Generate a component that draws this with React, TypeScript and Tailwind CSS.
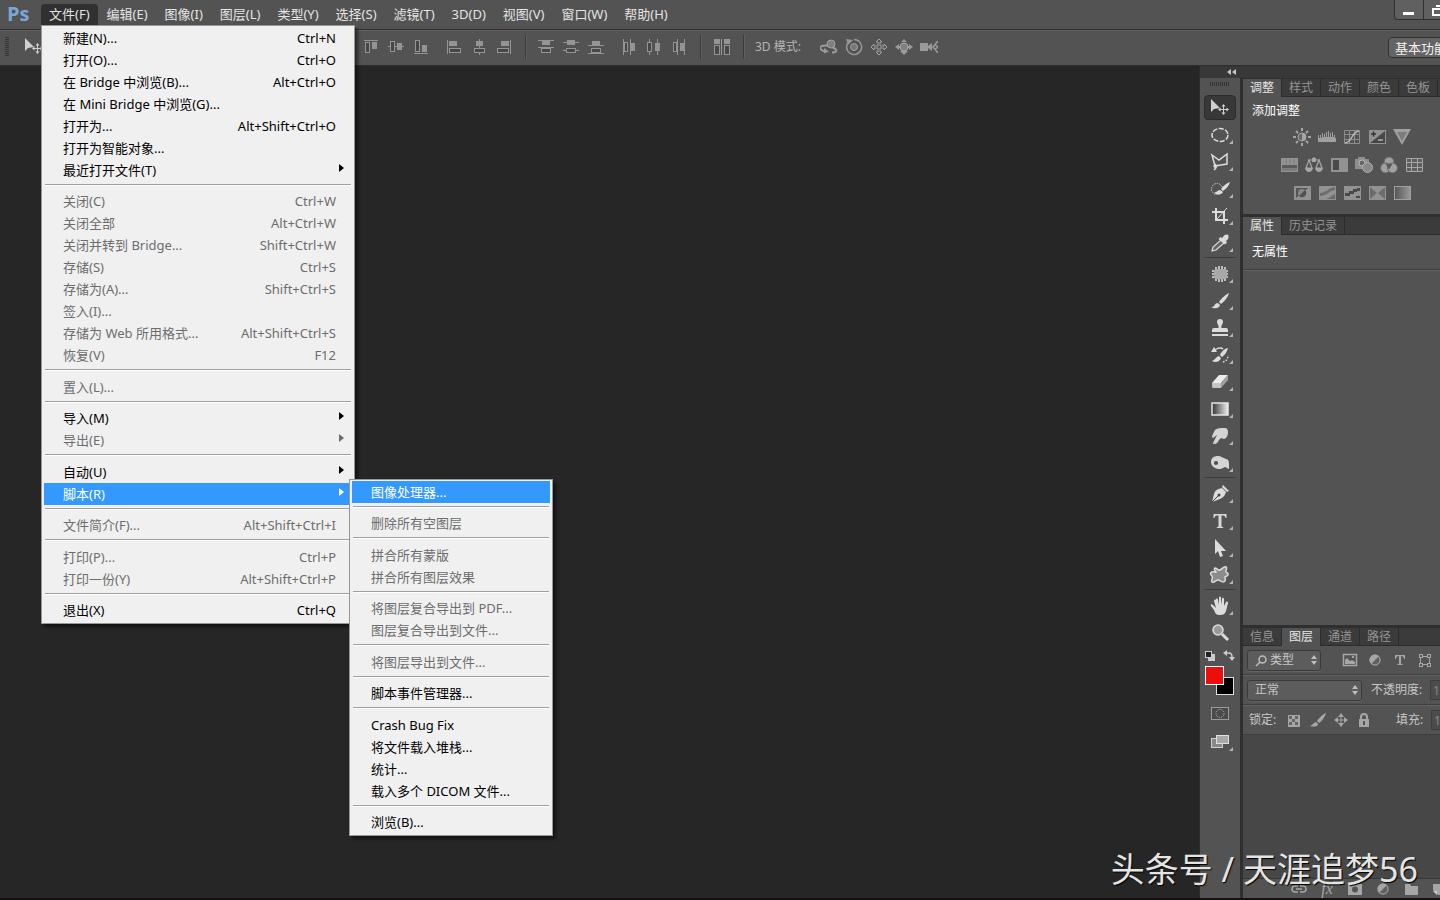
import { useState } from "react";
import type { ReactNode } from "react";

type MenuItem = {
  label: string;
  keys?: string;
  disabled?: boolean;
  arrow?: boolean;
  children?: MenuItem[][];
};

const menuBar = [
  "文件(F)",
  "编辑(E)",
  "图像(I)",
  "图层(L)",
  "类型(Y)",
  "选择(S)",
  "滤镜(T)",
  "3D(D)",
  "视图(V)",
  "窗口(W)",
  "帮助(H)",
];

const scriptMenu: MenuItem[][] = [
  [{ label: "图像处理器..." }],
  [{ label: "删除所有空图层", disabled: true }],
  [
    { label: "拼合所有蒙版", disabled: true },
    { label: "拼合所有图层效果", disabled: true },
  ],
  [
    { label: "将图层复合导出到 PDF...", disabled: true },
    { label: "图层复合导出到文件...", disabled: true },
  ],
  [{ label: "将图层导出到文件...", disabled: true }],
  [{ label: "脚本事件管理器..." }],
  [
    { label: "Crash Bug Fix" },
    { label: "将文件载入堆栈..." },
    { label: "统计..." },
    { label: "载入多个 DICOM 文件..." },
  ],
  [{ label: "浏览(B)..." }],
];

const fileMenu: MenuItem[][] = [
  [
    { label: "新建(N)...", keys: "Ctrl+N" },
    { label: "打开(O)...", keys: "Ctrl+O" },
    { label: "在 Bridge 中浏览(B)...", keys: "Alt+Ctrl+O" },
    { label: "在 Mini Bridge 中浏览(G)..." },
    { label: "打开为...", keys: "Alt+Shift+Ctrl+O" },
    { label: "打开为智能对象..." },
    { label: "最近打开文件(T)", arrow: true },
  ],
  [
    { label: "关闭(C)", keys: "Ctrl+W", disabled: true },
    { label: "关闭全部", keys: "Alt+Ctrl+W", disabled: true },
    { label: "关闭并转到 Bridge...", keys: "Shift+Ctrl+W", disabled: true },
    { label: "存储(S)", keys: "Ctrl+S", disabled: true },
    { label: "存储为(A)...", keys: "Shift+Ctrl+S", disabled: true },
    { label: "签入(I)...", disabled: true },
    { label: "存储为 Web 所用格式...", keys: "Alt+Shift+Ctrl+S", disabled: true },
    { label: "恢复(V)", keys: "F12", disabled: true },
  ],
  [{ label: "置入(L)...", disabled: true }],
  [
    { label: "导入(M)", arrow: true },
    { label: "导出(E)", arrow: true, disabled: true },
  ],
  [
    { label: "自动(U)", arrow: true },
    { label: "脚本(R)", arrow: true, children: scriptMenu },
  ],
  [{ label: "文件简介(F)...", keys: "Alt+Shift+Ctrl+I", disabled: true }],
  [
    { label: "打印(P)...", keys: "Ctrl+P", disabled: true },
    { label: "打印一份(Y)", keys: "Alt+Shift+Ctrl+P", disabled: true },
  ],
  [{ label: "退出(X)", keys: "Ctrl+Q" }],
];

const MenuList = ({
  groups,
  active,
  className,
}: {
  groups: MenuItem[][];
  active: string;
  className: string;
}) => {
  return (
    <div
      className={`absolute border border-[#979797] bg-[#f0f0f0] px-[2px] pt-px pb-[2px] text-[13px] text-black shadow-[3px_3px_3px_rgba(0,0,0,0.5)] ${className}`}
    >
      {groups.map((group, i) => (
        <ul
          key={i}
          className="relative pt-[9px] first:pt-0 odd:not-first:pt-[10px]"
        >
          {i > 0 && (
            <li
              role="separator"
              className="absolute top-[3px] right-px left-px h-[2px] border-t border-[#a0a0a0] bg-white"
            />
          )}
          {group.map((item) => (
            <li key={item.label} className="relative">
              <button
                disabled={item.disabled}
                className={`flex h-[22px] w-full items-center justify-between pr-4 pl-[19px] whitespace-nowrap disabled:text-[#6d6d6d] ${
                  item.label === active ? "bg-[#3399ff] text-white" : ""
                }`}
              >
                <span>{item.label}</span>
                {item.keys && <span>{item.keys}</span>}
                {item.arrow && (
                  <svg
                    className="-mr-2 mb-1"
                    width="5"
                    height="8"
                    viewBox="0 0 5 8"
                    fill="currentColor"
                  >
                    <path d="M0 0l5 4-5 4z" />
                  </svg>
                )}
              </button>
              {item.children && (
                <MenuList
                  groups={item.children}
                  active="图像处理器..."
                  className="-top-1 left-full z-10 -ml-[3px] w-[204px]"
                />
              )}
            </li>
          ))}
        </ul>
      ))}
    </div>
  );
};

/* options bar icons, 18px grid */
const Hollow = (p: { x: number; y: number; w: number; h: number }) => (
  <rect
    x={p.x + 0.5}
    y={p.y + 0.5}
    width={p.w - 1}
    height={p.h - 1}
    fill="#474747"
    stroke="#949494"
  />
);
const Solid = (p: { x: number; y: number; w: number; h: number }) => (
  <rect x={p.x} y={p.y} width={p.w} height={p.h} fill="#949494" />
);

const alignIcons: { name: string; art: ReactNode }[][] = [
  [
    {
      name: "顶对齐",
      art: (
        <>
          <Solid x={2} y={2} w={14} h={1} />
          <Hollow x={3} y={4} w={5} h={11} />
          <Solid x={10} y={4} w={5} h={7} />
        </>
      ),
    },
    {
      name: "垂直居中对齐",
      art: (
        <>
          <Solid x={1} y={8} w={16} h={1} />
          <Hollow x={3} y={3} w={5} h={11} />
          <Solid x={10} y={5} w={5} h={7} />
        </>
      ),
    },
    {
      name: "底对齐",
      art: (
        <>
          <Solid x={2} y={15} w={14} h={1} />
          <Hollow x={3} y={2} w={5} h={12} />
          <Solid x={10} y={7} w={5} h={7} />
        </>
      ),
    },
  ],
  [
    {
      name: "左对齐",
      art: (
        <>
          <Solid x={2} y={2} w={1} h={14} />
          <Solid x={4} y={3} w={8} h={5} />
          <Hollow x={4} y={10} w={12} h={5} />
        </>
      ),
    },
    {
      name: "水平居中对齐",
      art: (
        <>
          <Solid x={9} y={1} w={1} h={16} />
          <Solid x={6} y={3} w={7} h={5} />
          <Hollow x={4} y={10} w={11} h={5} />
        </>
      ),
    },
    {
      name: "右对齐",
      art: (
        <>
          <Solid x={15} y={2} w={1} h={14} />
          <Solid x={6} y={3} w={8} h={5} />
          <Hollow x={2} y={10} w={12} h={5} />
        </>
      ),
    },
  ],
  [
    {
      name: "按顶分布",
      art: (
        <>
          <Solid x={1} y={2} w={16} h={1} />
          <Solid x={5} y={3} w={8} h={4} />
          <Solid x={1} y={9} w={16} h={1} />
          <Hollow x={4} y={10} w={10} h={5} />
        </>
      ),
    },
    {
      name: "垂直居中分布",
      art: (
        <>
          <Solid x={1} y={4} w={16} h={1} />
          <Solid x={5} y={2} w={8} h={5} />
          <Solid x={1} y={12} w={16} h={1} />
          <Hollow x={4} y={10} w={10} h={5} />
        </>
      ),
    },
    {
      name: "按底分布",
      art: (
        <>
          <Solid x={5} y={3} w={8} h={4} />
          <Solid x={1} y={7} w={16} h={1} />
          <Hollow x={4} y={10} w={10} h={5} />
          <Solid x={1} y={15} w={16} h={1} />
        </>
      ),
    },
  ],
  [
    {
      name: "按左分布",
      art: (
        <>
          <Solid x={3} y={1} w={1} h={16} />
          <Hollow x={4} y={4} w={4} h={10} />
          <Solid x={10} y={1} w={1} h={16} />
          <Solid x={11} y={5} w={4} h={8} />
        </>
      ),
    },
    {
      name: "水平居中分布",
      art: (
        <>
          <Solid x={4} y={1} w={1} h={16} />
          <Hollow x={2} y={4} w={5} h={10} />
          <Solid x={12} y={1} w={1} h={16} />
          <Solid x={10} y={5} w={5} h={8} />
        </>
      ),
    },
    {
      name: "按右分布",
      art: (
        <>
          <Hollow x={3} y={4} w={4} h={10} />
          <Solid x={7} y={1} w={1} h={16} />
          <Solid x={10} y={5} w={4} h={8} />
          <Solid x={14} y={1} w={1} h={16} />
        </>
      ),
    },
  ],
];

const autoAlignArt = (
  <>
    <Solid x={1} y={1} w={6} h={5} />
    <Hollow x={1} y={7} w={6} h={10} />
    <Solid x={8} y={1} w={1} h={16} />
    <Solid x={11} y={1} w={6} h={5} />
    <Hollow x={11} y={7} w={6} h={10} />
  </>
);

const modeIcons: { name: string; art: ReactNode }[] = [
  {
    name: "旋转 3D 对象",
    art: (
      <>
        <path
          d="M6 13.500C1 13-1 10 1 8.500c2-1.500 7-1.500 12 1 5 2.500 4 5-1 5"
          fill="none"
          stroke="#9a9a9a"
          strokeWidth="2"
        />
        <circle cx="11" cy="6" r="4" fill="#808080" stroke="#a0a0a0" />
        <path d="M4 10l5 3.500-5 2z" fill="#9a9a9a" />
      </>
    ),
  },
  {
    name: "滚动 3D 对象",
    art: (
      <>
        <path
          d="M4 3.500a7.500 7.500 0 1 0 5-2"
          fill="none"
          stroke="#969696"
          strokeWidth="1.500"
        />
        <path d="M1 1l7 1-5 5z" fill="#969696" />
        <circle cx="9" cy="9" r="3.500" fill="#777" stroke="#a0a0a0" />
      </>
    ),
  },
  {
    name: "拖动 3D 对象",
    art: (
      <path
        d="M9 1l3 3h-2v4h4V6l3 3-3 3v-2h-4v4h2l-3 3-3-3h2v-4H4v2L1 9l3-3v2h4V4H6z"
        fill="#555"
        stroke="#a0a0a0"
      />
    ),
  },
  {
    name: "滑动 3D 对象",
    art: (
      <>
        <path d="M9 1l3 3H6zM9 17l-4-4h8zM0 9l4-3v2h10V6l4 3-4 3v-2H4v2z" fill="#9a9a9a" />
        <circle cx="9" cy="9" r="4" fill="#808080" stroke="#a8a8a8" />
      </>
    ),
  },
  {
    name: "缩放 3D 对象",
    art: (
      <>
        <path d="M0 5h8v8H0zM8 8l4-3v8L8 10z" fill="#9a9a9a" />
        <path
          d="M18 3l-5 6 5 6M15 7l3 2-3 2"
          fill="none"
          stroke="#9a9a9a"
          strokeWidth="1.500"
        />
      </>
    ),
  },
];

const IconButton = ({
  name,
  children,
  size = 18,
  className = "w-[25px]",
}: {
  name: string;
  children: ReactNode;
  size?: number;
  className?: string;
}) => (
  <button
    aria-label={name}
    title={name}
    className={`flex shrink-0 items-center justify-center ${className}`}
  >
    <svg width={size} height={size} viewBox={`0 0 ${size} ${size}`}>
      {children}
    </svg>
  </button>
);

const BarDivider = ({ className }: { className: string }) => (
  <span
    className={`h-6 w-[2px] shrink-0 border-l border-[#3a3a3a] bg-[#606060] ${className}`}
  />
);

/* toolbox icons, 22px grid */
const MoveArt = () => (
  <>
    <path d="M2 2v13l3-3 6-1z" fill="#d0d0d0" />
    <path
      d="M14.500 7l2 2.500h-1.500v2.500h2.500v-1.500l2.500 2-2.500 2V13H15v2.500h1.500l-2 2.500-2-2.500H14V13h-2.500v1.500L9 12.500l2.500-2V12H14V9.500h-1.500z"
      fill="#d0d0d0"
    />
  </>
);

const toolGroups: { name: string; art: ReactNode }[][] = [
  [
    { name: "移动工具", art: <MoveArt /> },
    {
      name: "椭圆选框工具",
      art: (
        <ellipse
          cx="11"
          cy="11"
          rx="8"
          ry="6.500"
          fill="none"
          stroke="#dcdcdc"
          strokeWidth="1.500"
          strokeDasharray="5 1.500"
        />
      ),
    },
    {
      name: "多边形套索工具",
      art: (
        <path
          d="M3 4l7 5 8-6v10l-12 2zM7 13l-2 2c0 2 4 1 3-1M7 15c1 2-1 3-2 4"
          fill="none"
          stroke="#dcdcdc"
          strokeWidth="1.500"
        />
      ),
    },
    {
      name: "快速选择工具",
      art: (
        <>
          <circle
            cx="8"
            cy="11"
            r="5.500"
            fill="none"
            stroke="#c8c8c8"
            strokeDasharray="1.500 1"
          />
          <path
            d="M21 4c-3 1-7 4-9 7l2 2c3-2 6-5 7-9zM11 12c-2 0-3 2-6 3 3 2 8 2 9-1z"
            fill="#dcdcdc"
          />
        </>
      ),
    },
    {
      name: "裁剪工具",
      art: (
        <>
          <path
            d="M7 3v12h12M3 7h12v12"
            fill="none"
            stroke="#dcdcdc"
            strokeWidth="2"
          />
          <path d="M8 14L18 3" stroke="#dcdcdc" />
        </>
      ),
    },
    {
      name: "吸管工具",
      art: (
        <>
          <path
            d="M12 8l3 3-8 7-4 1 1-4z"
            fill="#666"
            stroke="#dcdcdc"
            strokeWidth="1.200"
          />
          <path
            d="M14 5c2-3 5-3 5.500-1s-1 4-2.500 5l1 1.500-2 2L9.500 7l2-2L13 6z"
            fill="#dcdcdc"
          />
        </>
      ),
    },
  ],
  [
    {
      name: "修补工具",
      art: (
        <>
          <path
            d="M7 4v14M10 3v16M13 3v16M16 4v14M3 8h16M3 11h16M3 14h16"
            stroke="#e0e0e0"
            strokeWidth="1.500"
          />
          <rect x="5" y="6" width="13" height="10" rx="3" fill="#a8a8a8" />
        </>
      ),
    },
    {
      name: "画笔工具",
      art: (
        <path
          d="M20 3c-3 1-8 6-10 9l2 2c3-2 7-7 8-11zM9 13c-2 0-3 1-4 3-1 1-2 1-3 1 3 2 8 2 9-2z"
          fill="#dcdcdc"
        />
      ),
    },
    {
      name: "仿制图章工具",
      art: (
        <path
          d="M11 2a3 3 0 0 1 3 3c0 2-2 3-1.500 6H17q2 0 2 2v2H3v-2q0-2 2-2h4.500C10 8 8 7 8 5a3 3 0 0 1 3-3zM3 17h16v2H3z"
          fill="#dcdcdc"
        />
      ),
    },
    {
      name: "历史记录画笔工具",
      art: (
        <>
          <path
            d="M19 4c-3 0-7 4-8 7l2 2c3-2 5-5 6-9zM10 12c-2 0-3 3-7 5 3 2 8 1 9-3z"
            fill="#dcdcdc"
          />
          <path
            d="M5 7c2-3 7-4 9-2"
            fill="none"
            stroke="#dcdcdc"
            strokeWidth="1.500"
          />
          <path
            d="M14 18c4-1 5-4 5-7"
            fill="none"
            stroke="#dcdcdc"
            strokeWidth="1.500"
            strokeDasharray="1.500 1.500"
          />
          <path d="M2 8l3-5 3 5z" fill="#dcdcdc" />
        </>
      ),
    },
    {
      name: "橡皮擦工具",
      art: (
        <>
          <path d="M10 4h9l-7 8H3z" fill="#ececec" />
          <path d="M3 12h9v5H4q-1 0-1-2z" fill="#c4c4c4" />
          <path d="M19 4v5l-7 8v-5z" fill="#a0a0a0" />
        </>
      ),
    },
    {
      name: "渐变工具",
      art: (
        <>
          <defs>
            <linearGradient id="toolGradient">
              <stop offset="0" stopColor="#333" />
              <stop offset="1" stopColor="#eee" />
            </linearGradient>
          </defs>
          <rect
            x="3"
            y="5"
            width="16"
            height="12"
            fill="url(#toolGradient)"
            stroke="#e6e6e6"
            strokeWidth="1.500"
          />
        </>
      ),
    },
    {
      name: "涂抹工具",
      art: (
        <path
          d="M5 7c1-4 6-4 11-4 2 0 3 2 3 4 0 4-2 7-4 7-1 0-2-1-3-1l-2 2c-1 2-2 4-5 4-2 0 0-3 1-5l2-4-4 3c-2-1 0-4 1-6z"
          fill="#d4d4d4"
        />
      ),
    },
    {
      name: "海绵工具",
      art: (
        <>
          <path
            d="M2 10c0-4 3-6 7-6 3 0 5 2 8 3 2 0 3 2 3 5v5l-4-2c-3 2-7 3-10 1-2-1-4-3-4-6z"
            fill="#d4d4d4"
          />
          <circle cx="7" cy="11" r="2" fill="#4a4a4a" />
        </>
      ),
    },
  ],
  [
    {
      name: "钢笔工具",
      art: (
        <>
          <path d="M13 5c-4 1-7 2-8 6L3 19l8-3c4-2 5-4 6-7z" fill="#dcdcdc" />
          <path d="M14 2l6 6-2 1-5-5z" fill="#dcdcdc" />
          <path d="M3 19l6-6" stroke="#444" />
          <circle cx="10" cy="12" r="1.500" fill="#444" />
        </>
      ),
    },
    {
      name: "横排文字工具",
      art: (
        <path
          d="M4.500 4h13v4h-1c-.5-2-1-2.500-4-2.500v10.500c0 1 1 1 2 1.500v.5H7.500v-.5c1-.5 2-.5 2-1.500V5.500C6.500 5.500 6 6 5.500 8h-1z"
          fill="#d6d6d6"
        />
      ),
    },
    {
      name: "路径选择工具",
      art: <path d="M6 2v15l3-3 2 6 3-1-2-5h5z" fill="#dcdcdc" />,
    },
    {
      name: "自定形状工具",
      art: (
        <path
          d="M6 4c2 0 3 3 5 2s4-4 6-3-1 4 0 5 3 1 2 3-4 1-3 3 0 4-2 4-3-2-5-2-4 3-6 2 2-4 0-6-2-3 0-4 4 1 4 0-3-3-1-4z"
          fill="#8c8c8c"
          stroke="#dcdcdc"
          strokeWidth="1.500"
        />
      ),
    },
  ],
  [
    {
      name: "抓手工具",
      art: (
        <path
          d="M7 4c1-1 2 0 2 1l1 5V3c0-2 2-2 2 0v7l1-6c0-2 2-1 2 0v7l2-4c1-1 2 0 2 1l-2 8c-1 3-3 4-6 4-4 0-5-2-6-5l-3-4c-1-2 1-2 2-1l3 3-2-7c0-1 1-2 2-1z"
          fill="#dcdcdc"
        />
      ),
    },
    {
      name: "缩放工具",
      art: (
        <>
          <circle
            cx="9"
            cy="8"
            r="5"
            fill="#999"
            stroke="#dcdcdc"
            strokeWidth="1.500"
          />
          <path d="M13 12l6 6" stroke="#dcdcdc" strokeWidth="3" />
        </>
      ),
    },
  ],
];

const Toolbox = () => {
  const [tool, setTool] = useState("移动工具");

  return (
    <aside className="flex w-10 shrink-0 flex-col items-center bg-[#535353]">
      <div className="flex h-4 shrink-0 items-start pt-1">
        <div className="h-1 w-5 bg-[repeating-linear-gradient(90deg,#333_0_1px,#535353_1px_2px)]" />
      </div>
      {toolGroups.map((group, i) => (
        <div
          key={i}
          className={i > 0 ? "mt-px border-t border-[#3c3c3c] pt-[2px]" : ""}
        >
          {group.map((t) => (
            <button
              key={t.name}
              aria-label={t.name}
              title={t.name}
              onClick={() => setTool(t.name)}
              className="flex h-[27px] w-8 items-center"
            >
              <span
                className={`flex h-[25px] w-8 items-center justify-center rounded-sm border ${
                  tool === t.name
                    ? "border-[#2c2c2c] bg-[#383838]"
                    : "border-transparent"
                }`}
              >
                <svg width="30" height="22" viewBox="-4 0 30 22">
                  {t.art}
                  {t.name !== "移动工具" && t.name !== "缩放工具" && (
                    <path d="M24 16v4h-4z" fill="#b4b4b4" />
                  )}
                </svg>
              </span>
            </button>
          ))}
        </div>
      ))}
      <button aria-label="前景色和背景色" className="mt-[2px]">
        <svg width="34" height="50" viewBox="0 0 34 50">
          <rect x="5" y="6" width="7" height="7" fill="#ccc" />
          <rect x="2.500" y="3.500" width="6" height="6" fill="#222" stroke="#ccc" />
          <path
            d="M24 5h2q3 0 3 4v2"
            fill="none"
            stroke="#ccc"
            strokeWidth="1.500"
          />
          <path d="M24 2v6l-4-3zM26 9h6l-3 4z" fill="#ccc" />
          <rect x="13.500" y="29.500" width="17" height="17" fill="#000" stroke="#ddd" />
          <rect
            x="2.500"
            y="18.500"
            width="18"
            height="18"
            fill="#ee0d0d"
            stroke="#fff"
          />
        </svg>
      </button>
      <IconButton name="以快速蒙版模式编辑" size={22} className="mt-[5px]">
        <rect x="2.500" y="4.500" width="17" height="12" fill="#4a4a4a" stroke="#9a9a9a" />
        <circle
          cx="11"
          cy="10.500"
          r="4"
          fill="none"
          stroke="#bbb"
          strokeDasharray="1 1"
        />
      </IconButton>
      <IconButton name="更改屏幕模式" size={26} className="mt-1">
        <rect x="4.500" y="9.500" width="11" height="9" fill="#888" stroke="#d0d0d0" />
        <rect x="9.500" y="6.500" width="12" height="8" fill="#a8a8a8" stroke="#e0e0e0" />
        <path d="M26 18v4h-4z" fill="#b4b4b4" />
      </IconButton>
    </aside>
  );
};

/* adjustment icons, 18px grid */
const Frame = ({ children }: { children?: ReactNode }) => (
  <>
    <rect x="1" y="2" width="17" height="14" fill="#929292" />
    {children}
  </>
);

const adjustments: { name: string; art: ReactNode }[][] = [
  [
    {
      name: "亮度/对比度",
      art: (
        <>
          <circle cx="9" cy="9" r="4" fill="#666" stroke="#a6a6a6" />
          <path d="M9 5a4 4 0 0 1 0 8z" fill="#a6a6a6" />
          <path
            d="M9 0v3M9 15v3M0 9h3M15 9h3M3 3l2 2M13 13l2 2M3 15l2-2M13 5l2-2"
            stroke="#a6a6a6"
            strokeWidth="2"
          />
        </>
      ),
    },
    {
      name: "色阶",
      art: (
        <path
          d="M0 14V7h1v3h1V7h1v3h1V5h1v4h1V6h1v3h1V4h1v5h1V3h1v6h1V5h1v4h1V4h1v5h1V7h1v3h1v4z"
          fill="#a0a0a0"
        />
      ),
    },
    {
      name: "曲线",
      art: (
        <>
          <path
            d="M1.500 2.500h15v13h-15zM6.500 2v14M11.500 2v14M1 6.500h16M1 11.500h16"
            fill="none"
            stroke="#8c8c8c"
          />
          <path
            d="M2 15c8-1 6-11 14-12"
            fill="none"
            stroke="#b8b8b8"
            strokeWidth="1.500"
          />
        </>
      ),
    },
    {
      name: "曝光度",
      art: (
        <Frame>
          <path d="M2 15L17 3v12z" fill="#474747" />
          <path d="M3 6h5M5.500 3.500v5" stroke="#333" strokeWidth="1.500" />
          <path d="M10 12h5" stroke="#b0b0b0" strokeWidth="1.500" />
        </Frame>
      ),
    },
    {
      name: "自然饱和度",
      art: (
        <>
          <path d="M0 1h18L9 17z" fill="#a0a0a0" />
          <path d="M4 4h10l-5 9z" fill="#7c7c7c" />
        </>
      ),
    },
  ],
  [
    {
      name: "色相/饱和度",
      art: (
        <Frame>
          <path d="M2 9h15v3H2z" fill="#5a5a5a" />
          <path d="M2 12h15v3H2z" fill="#7c7c7c" />
          <path d="M6 3v5M10 3v5M14 3v5" stroke="#7a7a7a" />
        </Frame>
      ),
    },
    {
      name: "色彩平衡",
      art: (
        <>
          <path
            d="M9 1v5M3 4h12M4 4l-3 8h6zM14 4l-3 8h6z"
            fill="none"
            stroke="#a6a6a6"
            strokeWidth="1.200"
          />
          <path d="M0 12h8q-1 4-4 4t-4-4zM10 12h8q-1 4-4 4t-4-4zM7 2h4v4H7z" fill="#a6a6a6" />
        </>
      ),
    },
    {
      name: "黑白",
      art: (
        <Frame>
          <path d="M3 4h6v10H3z" fill="#4a4a4a" />
        </Frame>
      ),
    },
    {
      name: "照片滤镜",
      art: (
        <>
          <path d="M0 3h3V1h7v2h4v10H0z" fill="#8e8e8e" />
          <circle cx="7" cy="7" r="3" fill="#666" stroke="#bbb" />
          <circle cx="12.500" cy="11.500" r="5" fill="#8a8a8a" stroke="#b0b0b0" />
        </>
      ),
    },
    {
      name: "通道混合器",
      art: (
        <g stroke="#666">
          <circle cx="9" cy="6" r="5" fill="#a0a0a0" />
          <circle cx="5.500" cy="12" r="5" fill="#a0a0a0" />
          <circle cx="12.500" cy="12" r="5" fill="#a0a0a0" />
          <path d="M6 8h6l-3 5z" fill="#555" />
        </g>
      ),
    },
    {
      name: "颜色查找",
      art: (
        <path
          d="M1.500 2.500h16v13h-16zM6.500 2v14M12.500 2v14M1 6.500h16M1 11.500h16"
          fill="#5f5f5f"
          stroke="#a6a6a6"
        />
      ),
    },
  ],
  [
    {
      name: "反相",
      art: (
        <Frame>
          <path d="M3 4h12L3 14z" fill="#555" />
          <circle cx="9" cy="9" r="4" fill="#888" />
          <path d="M6 12a4 4 0 0 0 6-6z" fill="#505050" />
        </Frame>
      ),
    },
    {
      name: "色调分离",
      art: (
        <Frame>
          <path d="M2 9c6 0 8-5 15-6v3C11 7 8 12 2 12zM8 15c4-1 6-4 9-5v5z" fill="#6c6c6c" />
        </Frame>
      ),
    },
    {
      name: "阈值",
      art: (
        <Frame>
          <path d="M2 9h4V7h4V5h4V4h3v3h-3v1h-3v2H7v2H2zM9 14h4v-2h4v2z" fill="#484848" />
        </Frame>
      ),
    },
    {
      name: "可选颜色",
      art: (
        <Frame>
          <path d="M2 3l7 6-7 6zM17 3l-7 6 7 6z" fill="#6c6c6c" />
        </Frame>
      ),
    },
    {
      name: "渐变映射",
      art: (
        <>
          <defs>
            <linearGradient id="mapGradient">
              <stop offset="0" stopColor="#555" />
              <stop offset="1" stopColor="#999" />
            </linearGradient>
          </defs>
          <rect
            x="1.500"
            y="2.500"
            width="16"
            height="13"
            fill="url(#mapGradient)"
            stroke="#a0a0a0"
          />
        </>
      ),
    },
  ],
];

const HalfCircle = () => (
  <>
    <circle cx="9" cy="9" r="5.500" fill="#a6a6a6" />
    <path d="M13 5a5.500 5.500 0 0 1-8 8z" fill="#606060" />
    <circle cx="9" cy="9" r="5" fill="none" stroke="#a6a6a6" />
  </>
);

const Tabs = ({ tabs, active }: { tabs: string[]; active: string }) => (
  <div role="tablist" className="flex h-[18px] bg-[#3b3b3b]">
    {tabs.map((tab) => (
      <button
        key={tab}
        role="tab"
        aria-selected={tab === active}
        className={`shrink-0 border-r border-[#2c2c2c] px-[7px] leading-[18px] ${
          tab === active
            ? "bg-[#535353] text-[#e6e6e6]"
            : "border-b text-[#949494]"
        }`}
      >
        {tab}
      </button>
    ))}
    <span className="flex-1 border-b border-[#2c2c2c]" />
  </div>
);

const UpDown = () => (
  <svg
    className="pointer-events-none absolute top-1/2 right-1 -translate-y-1/2"
    width="6"
    height="10"
    viewBox="0 0 6 10"
    fill="#bdbdbd"
  >
    <path d="M3 0l3 4H0zM3 10L0 6h6z" />
  </svg>
);

const selectStyle =
  "appearance-none rounded-[3px] border border-[#3a3a3a] bg-[#5c5c5c] text-[#c6c6c6] shadow-[0_1px_0_#636363]";

const LayersPanel = () => {
  return (
    <section className="flex flex-1 flex-col">
      <Tabs tabs={["信息", "图层", "通道", "路径"]} active="图层" />
      <div className="flex h-[29px] items-center border-b border-[#3e3e3e] bg-[#535353] pl-1">
        <div className="relative mr-4">
          <svg
            className="pointer-events-none absolute top-[5px] left-2"
            width="12"
            height="12"
            viewBox="0 0 12 12"
            fill="none"
            stroke="#bdbdbd"
            strokeWidth="1.500"
          >
            <circle cx="7.500" cy="4.500" r="3.500" />
            <path d="M5 7l-4 4" />
          </svg>
          <select
            aria-label="过滤类型"
            className={`h-[21px] w-[74px] pl-[22px] ${selectStyle}`}
          >
            <option>类型</option>
          </select>
          <UpDown />
        </div>
        <IconButton name="像素图层滤镜">
          <path
            d="M2.500 3.500h13v11h-13z"
            fill="none"
            stroke="#a6a6a6"
            strokeWidth="1.500"
          />
          <path d="M4 13V9l2-2 3 3 2-1 3 2v2zM11 5h2v2h-2z" fill="#a6a6a6" />
        </IconButton>
        <IconButton name="调整图层滤镜">
          <HalfCircle />
        </IconButton>
        <IconButton name="文字图层滤镜">
          <path
            d="M4 4h10v4h-1c0-2-1-3-3-3v8l2 .5v.5H6v-.5l2-.5V5C6 5 5 6 5 8H4z"
            fill="#a6a6a6"
          />
        </IconButton>
        <IconButton name="形状图层滤镜">
          <path d="M4.500 5.500h9v8h-9z" fill="none" stroke="#a6a6a6" />
          <path d="M3 3h4v4H3zM11 3h4v4h-4zM3 12h4v4H3zM11 12h4v4h-4z" fill="#a6a6a6" />
          <path d="M4 4h2v2H4zM12 4h2v2h-2zM4 13h2v2H4zM12 13h2v2h-2z" fill="#535353" />
        </IconButton>
      </div>
      <div className="flex h-[30px] items-center border-t border-b border-t-[#626262] border-b-[#3e3e3e] bg-[#535353] pl-1">
        <div className="relative mr-[9px]">
          <select
            aria-label="混合模式"
            className={`h-[21px] w-[115px] pl-[7px] ${selectStyle}`}
          >
            <option>正常</option>
          </select>
          <UpDown />
        </div>
        <label htmlFor="opacity" className="w-[59px] shrink-0 text-[#c6c6c6]">
          不透明度:
        </label>
        <input
          id="opacity"
          defaultValue="100%"
          className="h-5 w-10 border border-[#3e3e3e] bg-[#4c4c4c] pl-[2px] text-[#8a8a8a]"
        />
      </div>
      <div className="flex h-[30px] items-center border-t border-b border-t-[#626262] border-b-[#3e3e3e] bg-[#535353] pl-[6px]">
        <span className="w-[33px] shrink-0 text-[#c6c6c6]">锁定:</span>
        <IconButton name="锁定透明像素" className="w-6">
          <path d="M3 4h12v12H3z" fill="#a6a6a6" />
          <path
            d="M4 5h3v3H4zM10 5h3v3h-3zM7 8h3v3H7zM4 11h3v3H4zM10 11h3v3h-3z"
            fill="#666"
          />
        </IconButton>
        <IconButton name="锁定图像像素" className="w-6">
          <path
            d="M17 2c-3 1-7 5-9 8l2 2c3-2 6-6 7-10zM7 11c-2 0-3 3-6 4 3 1 8 1 8-2z"
            fill="#a6a6a6"
          />
        </IconButton>
        <IconButton name="锁定位置" className="w-[22px]">
          <path
            d="M9 2l3 4h-2.500v2.500H12V6l4 3-4 3V9.500H9.500V12H12l-3 4-3-4h2.500V9.500H6V12L2 9l4-3v2.500h2.500V6H6z"
            fill="#a6a6a6"
          />
        </IconButton>
        <IconButton name="锁定全部" className="mr-5 w-6">
          <path d="M6 9V6q0-3 3-3t3 3v3" fill="none" stroke="#a6a6a6" strokeWidth="2" />
          <path d="M4 8h10v8H4z" fill="#a6a6a6" />
          <path d="M8 10h2v4H8z" fill="#555" />
        </IconButton>
        <label htmlFor="fill" className="w-[35px] shrink-0 text-[#c6c6c6]">
          填充:
        </label>
        <input
          id="fill"
          defaultValue="100%"
          className="h-5 w-10 border border-[#3e3e3e] bg-[#4c4c4c] pl-[2px] text-[#8a8a8a]"
        />
      </div>
      <div className="flex-1 bg-[#474747]" />
      <div className="flex h-5 items-center border-t border-[#383838] bg-[#535353] pl-[42px]">
        <IconButton name="链接图层" className="w-7">
          <path
            d="M8 6H5a3 3 0 0 0 0 6h3M10 6h3a3 3 0 0 1 0 6h-3M6 9h6"
            fill="none"
            stroke="#a6a6a6"
            strokeWidth="1.500"
          />
        </IconButton>
        <button
          aria-label="添加图层样式"
          className="w-7 font-['Liberation_Serif',serif] text-base leading-4 text-[#a6a6a6] italic"
        >
          fx
        </button>
        <IconButton name="添加图层蒙版" className="w-7">
          <path d="M2 4h14v11H2z" fill="#a6a6a6" />
          <circle cx="9" cy="9.500" r="3" fill="#555" />
        </IconButton>
        <IconButton name="创建新的填充或调整图层" className="w-7">
          <HalfCircle />
        </IconButton>
        <IconButton name="创建新组" className="w-7">
          <path d="M3 4h5l1 2h7v9H3z" fill="#a6a6a6" />
        </IconButton>
        <IconButton name="创建新图层" className="w-7">
          <path d="M3 4h12v11h-7L3 10z" fill="#a6a6a6" />
          <path d="M3 11h4v4z" fill="#ccc" />
        </IconButton>
      </div>
    </section>
  );
};

const App = () => {
  const [workspace] = useState("基本功能");

  return (
    <div className="relative flex h-screen flex-col overflow-hidden border-b-2 border-[#151012] bg-[#262626] font-['Noto_Sans','Noto_Sans_CJK_SC',sans-serif] text-[12px] leading-4 whitespace-nowrap">
      <header className="relative z-20 flex h-[30px] shrink-0 justify-between border-b border-[#303030] bg-[#535353] text-[#e4e4e4]">
        <nav className="flex">
          <span className="w-[41px] pl-[7px] font-['Open_Sans',sans-serif] text-[20px] leading-7 font-bold text-[#7aa7d6]">
            Ps
          </span>
          <div className="relative flex gap-px pt-1 text-[13px]">
            {menuBar.map((name) => (
              <button
                key={name}
                className={`h-[21px] rounded-t-sm px-2 pb-[2px] leading-[18px] ${
                  name === "文件(F)" ? "bg-[#303030]" : ""
                }`}
              >
                {name}
              </button>
            ))}
            <MenuList
              groups={fileMenu}
              active="脚本(R)"
              className="top-[25px] left-0 w-[314px]"
            />
          </div>
        </nav>
        <div className="flex w-[46px] shrink-0 overflow-hidden">
          <IconButton
            name="最小化"
            className="h-5 w-[30px] rounded-bl-sm border border-t-0 border-[#303030] bg-[#606060]"
          >
            <path d="M3 11h11v3H3z" fill="#fff" />
          </IconButton>
          <IconButton
            name="还原"
            className="h-5 w-[30px] border-b border-[#303030] bg-[#606060]"
          >
            <path
              d="M6 5h8v6M3 8h8v6H3z"
              fill="none"
              stroke="#fff"
              strokeWidth="2"
            />
          </IconButton>
        </div>
      </header>

      <div className="flex h-9 shrink-0 items-center overflow-hidden border-t border-b border-t-[#626262] border-b-[#2c2c2c] bg-[#535353] pb-[2px]">
        <span className="ml-[5px] h-5 w-1 shrink-0 bg-[repeating-linear-gradient(#333_0_1px,#535353_1px_2px)]" />
        <div className="w-[349px] shrink-0 pl-[14px]">
          <svg width="22" height="22" viewBox="0 0 22 22">
            <MoveArt />
          </svg>
        </div>
        {alignIcons.map((group, i) => (
          <div key={i} className="flex items-center">
            {group.map((icon) => (
              <IconButton key={icon.name} name={icon.name}>
                {icon.art}
              </IconButton>
            ))}
            {i === 1 ? (
              <BarDivider className="mr-[6px] ml-[9px]" />
            ) : i === 3 ? (
              <BarDivider className="mr-[7px] ml-[9px]" />
            ) : (
              <span className="w-2" />
            )}
          </div>
        ))}
        <IconButton name="自动对齐图层">{autoAlignArt}</IconButton>
        <BarDivider className="mr-[10px] ml-[9px]" />
        <span className="w-[61px] shrink-0 text-[#b4b4b4]">3D 模式:</span>
        {modeIcons.map((icon) => (
          <IconButton key={icon.name} name={icon.name}>
            {icon.art}
          </IconButton>
        ))}
        <div className="ml-auto w-[52px] shrink-0 overflow-hidden">
          <button className="mt-px h-[21px] w-24 rounded-sm border border-[#303030] bg-[#646464] pl-[6px] text-left text-[13px] text-[#f0f0f0]">
            {workspace}
          </button>
        </div>
      </div>

      <main className="flex min-h-0 flex-1">
        <div className="flex-1 bg-[#262626]" />
        <div className="flex w-[241px] shrink-0 flex-col overflow-hidden border-l border-[#2c2c2c] bg-[#2f2f2f]">
          <div className="h-3 shrink-0 bg-[#383838] pl-[26px]">
            <button aria-label="折叠面板" className="block pt-[2px]">
              <svg width="10" height="8" viewBox="0 0 10 8" fill="#c8c8c8">
                <path d="M5 1v6L1 4zM10 1v6L6 4z" />
              </svg>
            </button>
          </div>
          <div className="flex min-h-0 flex-1 gap-[3px]">
            <Toolbox />
            <div className="flex w-[217px] shrink-0 flex-col gap-[3px] pt-px">
              <section className="h-[135px] shrink-0 bg-[#535353]">
                <Tabs
                  tabs={["调整", "样式", "动作", "颜色", "色板"]}
                  active="调整"
                />
                <h2 className="pt-1 pl-[9px] leading-5 text-white">添加调整</h2>
                <div className="flex flex-col pt-[2px]">
                  {adjustments.map((row, i) => (
                    <div key={i} className="flex h-7 items-center justify-center">
                      {row.map((a) => (
                        <IconButton key={a.name} name={a.name}>
                          {a.art}
                        </IconButton>
                      ))}
                    </div>
                  ))}
                </div>
              </section>
              <section className="h-[408px] shrink-0 bg-[#535353]">
                <Tabs tabs={["属性", "历史记录"]} active="属性" />
                <h2 className="border-b border-[#3e3e3e] py-2 pl-[9px] leading-[18px] text-white shadow-[0_1px_0_#646464]">
                  无属性
                </h2>
              </section>
              <LayersPanel />
            </div>
          </div>
        </div>
      </main>

      <p className="pointer-events-none absolute right-[22px] bottom-[9px] z-30 text-[34px] leading-10 text-[#e4e4e4] [text-shadow:1px_1px_1px_#000]">
        头条号 / 天涯追梦56
      </p>
    </div>
  );
};

export default App;
